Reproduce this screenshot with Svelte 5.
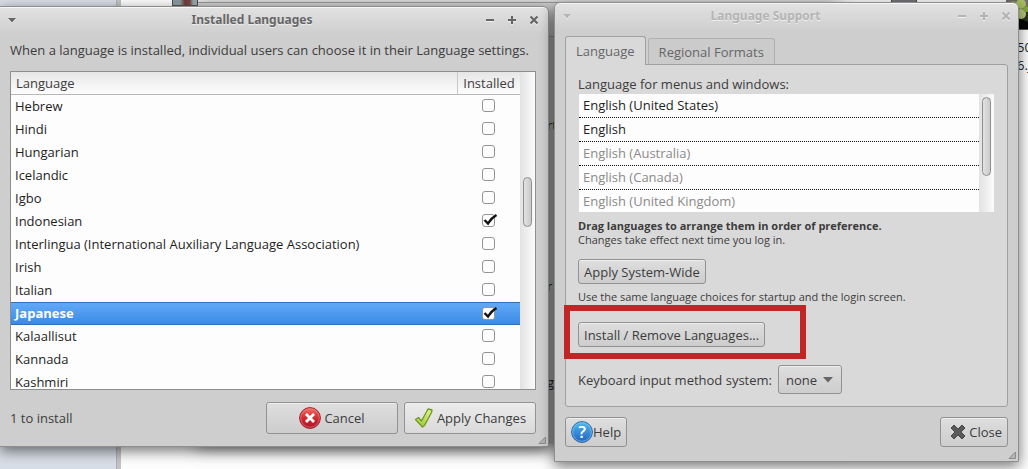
<script>
  let languages = $state([
    { name: 'Hebrew', on: false },
    { name: 'Hindi', on: false },
    { name: 'Hungarian', on: false },
    { name: 'Icelandic', on: false },
    { name: 'Igbo', on: false },
    { name: 'Indonesian', on: true },
    { name: 'Interlingua (International Auxiliary Language Association)', on: false },
    { name: 'Irish', on: false },
    { name: 'Italian', on: false },
    { name: 'Japanese', on: true },
    { name: 'Kalaallisut', on: false },
    { name: 'Kannada', on: false },
    { name: 'Kashmiri', on: false }
  ]);
  let selected = $state('Japanese');
  const order = [
    { name: 'English (United States)', active: true },
    { name: 'English', active: true },
    { name: 'English (Australia)', active: false },
    { name: 'English (Canada)', active: false },
    { name: 'English (United Kingdom)', active: false }
  ];
</script>

{#snippet titlebar(title)}
  <header class="titlebar">
    <button class="wm" aria-label="Window menu">
      <svg width="10" height="8" viewBox="0 0 10 8"><path d="M1 2h8L5 6.500z" fill="currentColor" /></svg>
    </button>
    <h1>{title}</h1>
    <button class="wm" aria-label="Minimize">
      <svg width="10" height="10" viewBox="0 0 10 10"><path d="M1 5h8" stroke="currentColor" stroke-width="2" /></svg>
    </button>
    <button class="wm" aria-label="Maximize">
      <svg width="10" height="10" viewBox="0 0 10 10"><path d="M1 5h8M5 1v8" stroke="currentColor" stroke-width="2" /></svg>
    </button>
    <button class="wm" aria-label="Close window">
      <svg width="10" height="10" viewBox="0 0 10 10"><path d="M1.500 1.500l7 7M8.500 1.500l-7 7" stroke="currentColor" stroke-width="2.200" /></svg>
    </button>
  </header>
{/snippet}

{#snippet grip()}
  <svg class="grip" width="8" height="8" viewBox="0 0 8 8"><path d="M7.500 1v6.500H1z" fill="#b4b4b4" stroke="#8c8c8c" /></svg>
{/snippet}

<div class="desktop">
  <div class="side"></div>
  <div class="thumb first"></div>
  <div class="thumb second"></div>
  <div class="photo">
    <svg width="22" height="30" viewBox="0 0 22 30">
      <rect width="22" height="30" fill="#2b3320" />
      <rect width="22" height="6" fill="#746a70" />
      <circle cx="7" cy="5" r="4" fill="#7e9c3e" />
      <circle cx="15" cy="4" r="5" fill="#a9be62" />
      <circle cx="6" cy="14" r="4" fill="#9cb64e" />
      <circle cx="15" cy="14" r="5" fill="#b4c977" />
      <circle cx="20" cy="9" r="3" fill="#88a444" />
      <path d="M0 21q11-5 22 1v8H0z" fill="#080808" />
      <path d="M0 29.500h22" stroke="#5b5b48" />
    </svg>
  </div>
  <div class="caption">50<br />6.j</div>
  <div class="back">
    <div class="backbar"></div>
    <span class="frag f1">rt</span>
    <span class="frag f2">r</span>
    <span class="frag f3">ge</span>
  </div>

  <section class="window installed">
    {@render titlebar('Installed Languages')}
    <p class="intro">When a language is installed, individual users can choose it in their Language settings.</p>
    <div class="listbox">
      <div class="scroller">
        <table>
          <thead>
            <tr><th>Language</th><th class="tick">Installed</th></tr>
          </thead>
          <tbody>
            {#each languages as lang}
              <tr class:selected={lang.name === selected} onclick={() => (selected = lang.name)}>
                <td>{lang.name}</td>
                <td class="tick">
                  <span class="check">
                    <input type="checkbox" aria-label={lang.name} bind:checked={lang.on} />
                    {#if lang.on}
                      <svg width="17" height="14" viewBox="0 0 17 14"><path d="M2.500 6L6 9.500C8 6 11 3 14.500 1" fill="none" stroke="#111" stroke-width="2.400" /></svg>
                    {/if}
                  </span>
                </td>
              </tr>
            {/each}
          </tbody>
        </table>
      </div>
      <div class="trough"><div class="thumbbar middle"></div></div>
    </div>
    <footer class="actions">
      <span class="status">1 to install</span>
      <button class="btn wide">
        <svg width="22" height="22" viewBox="0 0 22 22">
          <defs>
            <linearGradient id="red" x1="0" y1="0" x2="0" y2="1">
              <stop offset="0" stop-color="#f0746a" /><stop offset="0.500" stop-color="#d42a30" /><stop offset="1" stop-color="#a8142c" />
            </linearGradient>
          </defs>
          <circle cx="11" cy="11" r="10.400" fill="url(#red)" stroke="#9c1c2c" />
          <circle cx="11" cy="11" r="9.300" fill="none" stroke="#f08a80" stroke-opacity="0.600" />
          <path d="M7 7l8 8M15 7l-8 8" stroke="#fff" stroke-width="2.800" />
        </svg>
        Cancel
      </button>
      <button class="btn wide bright">
        <svg width="20" height="22" viewBox="0 0 20 22">
          <defs>
            <linearGradient id="green" x1="0" y1="0" x2="0" y2="1">
              <stop offset="0" stop-color="#e2f48c" /><stop offset="1" stop-color="#9ccc38" />
            </linearGradient>
          </defs>
          <path d="M1.500 12.500L4.500 10.500L7.500 14L14 2L18 3L17.500 5.500L10.500 18.500L8.500 20z" fill="url(#green)" stroke="#6f9626" stroke-width="1.300" stroke-linejoin="round" />
        </svg>
        Apply Changes
      </button>
    </footer>
    {@render grip()}
  </section>

  <section class="window support">
    {@render titlebar('Language Support')}
    <div class="tabs" role="tablist">
      <button class="tab current" role="tab" aria-selected="true">Language</button>
      <button class="tab" role="tab" aria-selected="false">Regional Formats</button>
    </div>
    <div class="panel">
      <p class="label" id="order-label">Language for menus and windows:</p>
      <div class="order">
        <ul aria-labelledby="order-label">
          {#each order as item}
            <li class:dim={!item.active}>{item.name}</li>
          {/each}
        </ul>
        <div class="trough"><div class="thumbbar top"></div></div>
      </div>
      <p class="note hint"><strong>Drag languages to arrange them in order of preference.</strong><br />Changes take effect next time you log in.</p>
      <button class="btn">Apply System-Wide</button>
      <p class="note">Use the same language choices for startup and the login screen.</p>
      <div class="install">
        <button class="btn">Install / Remove Languages...</button>
        <div class="highlight"></div>
      </div>
      <div class="method">
        <label for="ims">Keyboard input method system:</label>
        <span class="combo">
          <select id="ims"><option>none</option></select>
          <svg width="10" height="6" viewBox="0 0 10 6"><path d="M0 0h10L5 5.500z" fill="#666" /></svg>
        </span>
      </div>
    </div>
    <footer class="bottom">
      <button class="btn help">
        <svg width="22" height="22" viewBox="0 0 22 22">
          <defs>
            <linearGradient id="blue" x1="0" y1="0" x2="0" y2="1">
              <stop offset="0" stop-color="#4cbcf0" /><stop offset="1" stop-color="#2460c0" />
            </linearGradient>
          </defs>
          <circle cx="11" cy="11" r="10.400" fill="url(#blue)" stroke="#2a66ac" />
          <circle cx="11" cy="11" r="9.300" fill="none" stroke="#8cd0f8" stroke-opacity="0.600" />
          <text x="11" y="17" text-anchor="middle" font-size="17" font-weight="600" fill="#fff">?</text>
        </svg>Help
      </button>
      <button class="btn close">
        <svg width="16" height="16" viewBox="0 0 16 16">
          <path d="M1 4L4 1l4 4 4-4 3 3-4 4 4 4-3 3-4-4-4 4-3-3 4-4z" fill="#5a5a5a" stroke="#484848" stroke-linejoin="round" />
        </svg>
        Close
      </button>
    </footer>
    {@render grip()}
  </section>
</div>

<style>
  :global(body) {
    margin: 0;
    overflow: hidden;
  }
  .desktop {
    position: relative;
    display: grid;
    grid-template-columns: minmax(0, 549fr) minmax(0, 465fr);
    gap: 5px;
    align-items: start;
    padding-right: 9px;
    min-height: 100vh;
    box-sizing: border-box;
    overflow: hidden;
    background: #fdfdfd;
    font-family: 'Open Sans', 'Noto Sans', sans-serif;
    font-size: 13px;
    line-height: 18px;
    color: #3c3c3c;
  }
  .side {
    position: absolute;
    inset: 0 auto 0 0;
    width: 117px;
    background: #d8dee7;
    border-right: 4px solid #c4c4c4;
    box-shadow: inset -1px 0 #b0b0b0;
  }
  .thumb {
    position: absolute;
    top: 0;
    width: 24px;
    height: 8px;
    border: 1px solid #4a4a40;
    border-top: 0;
  }
  .first {
    z-index: 1;
    left: 172px;
    height: 5px;
    background: linear-gradient(90deg, #7f9298 30%, #6e3434 50%, #6e4440 70%, #8aa0a4 85%);
  }
  .second {
    right: 111px;
    background: #77757a;
  }
  .photo {
    position: absolute;
    top: 0;
    right: 0;
    width: 22px;
  }
  .photo svg {
    display: block;
  }
  .caption {
    position: absolute;
    top: 38px;
    right: 0;
    width: 11px;
    white-space: nowrap;
    color: #222;
  }
  .back {
    position: absolute;
    inset: 2px 190px 26px 196px;
    background: #a4a4a4;
    border: 1px solid #999;
    box-sizing: border-box;
    box-shadow: 0 3px 16px rgba(0, 0, 0, 0.500);
  }
  .backbar {
    height: 33px;
    background: linear-gradient(#d0d0d0, #ababab);
    border-bottom: 1px solid #888;
  }
  .frag {
    position: absolute;
    left: 350px;
    color: #222;
  }
  .f1 { top: 113px; }
  .f2 { top: 274px; }
  .f3 { top: 370px; }
  .window {
    position: relative;
    box-sizing: border-box;
    border: 1px solid #8e8e8e;
    border-radius: 6px 6px 0 0;
    background: linear-gradient(#e2e2e2, #cecece 28px);
    box-shadow: inset 0 1px #f6f6f6, 0 4px 14px rgba(0, 0, 0, 0.550);
  }
  .installed {
    margin-top: 6px;
    border-left: 0;
    border-top-left-radius: 0;
    padding: 0 12px 12px 10px;
  }
  .support {
    margin-top: 2px;
    padding: 0 10px 14px 10px;
  }
  .titlebar {
    display: flex;
    align-items: center;
    gap: 12px;
    height: 25px;
    margin: 0 -3px;
    color: #666;
  }
  .support .titlebar {
    color: #b4b4b4;
  }
  h1 {
    flex: 1;
    margin: 0;
    padding-left: 2px;
    text-align: center;
    font-family: 'Noto Sans', sans-serif;
    font-size: 12px;
    line-height: 18px;
    font-weight: 700;
    text-shadow: 0 1px rgba(255, 255, 255, 0.600);
  }
  .wm {
    display: flex;
    padding: 0;
    border: 0;
    background: none;
    color: inherit;
    filter: drop-shadow(0 1px rgba(255, 255, 255, 0.600));
  }
  p {
    margin: 0;
  }
  .intro {
    margin: 9px 0 12px;
    white-space: nowrap;
  }
  .listbox {
    display: flex;
    height: 317px;
    border: 1px solid #8e8e8e;
    background: #fdfdfd;
  }
  .scroller {
    flex: 1;
    min-width: 0;
    overflow: hidden;
  }
  table {
    width: 100%;
    border-collapse: separate;
    border-spacing: 0;
    table-layout: fixed;
    color: #1e1e1e;
  }
  th {
    height: 23px;
    box-sizing: border-box;
    padding: 0 5px;
    border-bottom: 1px solid #b8b8b8;
    background: linear-gradient(#e6e6e6, #fdfdfd);
    color: #3c3c3c;
    font-weight: 400;
    text-align: left;
  }
  td {
    height: 23px;
    box-sizing: border-box;
    padding: 0 4px 2px;
    white-space: nowrap;
  }
  .tick {
    width: 63px;
    box-sizing: border-box;
    padding: 0 0 2px;
    text-align: center;
  }
  th.tick {
    padding: 0;
    border-left: 1px solid #c8c8c8;
  }
  .selected td {
    background: linear-gradient(#62aaf8, #3a8ae6);
    border-top: 1px solid #2c70be;
    border-bottom: 1px solid #2c70be;
    padding-bottom: 1px;
    color: #fff;
    font-weight: 700;
    line-height: 16px;
  }
  .check {
    position: relative;
    display: flex;
    width: 13px;
    margin: 0 auto;
  }
  .check svg {
    position: absolute;
    left: 0;
    top: 0;
    pointer-events: none;
  }
  input {
    appearance: none;
    width: 13px;
    height: 13px;
    margin: 0;
    border: 1px solid #949494;
    border-radius: 3px;
    background: #fdfdfd;
  }
  .trough {
    display: flex;
    flex-direction: column;
    align-items: center;
    width: 15px;
    background: linear-gradient(90deg, #e2e2e2, #fbfbfb);
  }
  .thumbbar {
    box-sizing: border-box;
    width: 9px;
    border: 1px solid #8e8e8e;
    border-radius: 5px;
    background: linear-gradient(90deg, #e2e2e2, #cacaca);
  }
  .middle {
    height: 50px;
    margin-top: 105px;
  }
  .top {
    height: 79px;
    margin-top: 3px;
  }
  .actions {
    display: flex;
    align-items: center;
    gap: 6px;
    margin-top: 12px;
  }
  .status {
    flex: 1;
  }
  .btn {
    display: inline-flex;
    align-items: center;
    justify-content: center;
    gap: 3px;
    box-sizing: border-box;
    height: 25px;
    padding: 0 5px;
    border: 1px solid #929292;
    border-radius: 3px;
    background: linear-gradient(#dedede, #cdcdcd);
    box-shadow: inset 0 1px #eee;
    font: inherit;
    color: #3c3c3c;
    white-space: nowrap;
  }
  .wide {
    width: 132px;
    height: 32px;
  }
  .bright {
    background: linear-gradient(#ebebeb, #dadada);
  }
  .grip {
    position: absolute;
    right: 2px;
    bottom: 2px;
  }
  .tabs {
    display: flex;
    align-items: flex-end;
    gap: 2px;
    margin-top: 8px;
  }
  .tab {
    position: relative;
    height: 26px;
    padding: 0 10px;
    border: 1px solid #b0b0b0;
    border-bottom: 0;
    border-radius: 3px 3px 0 0;
    background: #cbcbcb;
    font: inherit;
    color: #666;
  }
  .current {
    z-index: 1;
    height: 29px;
    margin-bottom: -1px;
    border-color: #a0a0a0;
    background: #d9d9d9;
  }
  .panel {
    display: flex;
    flex-direction: column;
    align-items: flex-start;
    padding: 10px 13px 12px 12px;
    border: 1px solid #a0a0a0;
    border-radius: 0 3px 3px 3px;
    background: #d9d9d9;
  }
  .order {
    display: flex;
    align-self: stretch;
    height: 118px;
    margin: 1px 0 0 1px;
    background: #fdfdfd;
  }
  ul {
    flex: 1;
    margin: 0;
    padding: 0;
    overflow: hidden;
    list-style: none;
    color: #1e1e1e;
  }
  li {
    height: 24px;
    box-sizing: border-box;
    padding: 2px 4px;
    border-bottom: 1px dotted #111;
  }
  .dim {
    color: #8a8a8a;
  }
  .note {
    margin: 6px 0;
    font-size: 11px;
    line-height: 14px;
  }
  .hint {
    margin: 7px 0 12px;
  }
  .install {
    position: relative;
    display: flex;
    margin-top: 12px;
  }
  .highlight {
    position: absolute;
    inset: -17px -41px -12px -14px;
    border: 6px solid #c02626;
    pointer-events: none;
  }
  .method {
    display: flex;
    align-items: center;
    gap: 6px;
    margin-top: 18px;
  }
  .combo {
    position: relative;
    display: inline-flex;
  }
  .combo svg {
    position: absolute;
    right: 9px;
    top: 12px;
    pointer-events: none;
  }
  select {
    appearance: none;
    width: 64px;
    height: 29px;
    padding: 0 7px;
    border: 1px solid #929292;
    border-radius: 3px;
    background: linear-gradient(#dedede, #cdcdcd);
    box-shadow: inset 0 1px #eee;
    font: inherit;
    color: #3c3c3c;
  }
  .bottom {
    display: flex;
    justify-content: space-between;
    margin-top: 10px;
  }
  .bottom .btn {
    height: 30px;
  }
  .help {
    gap: 0;
  }
  .close {
    padding-left: 9px;
  }
</style>
